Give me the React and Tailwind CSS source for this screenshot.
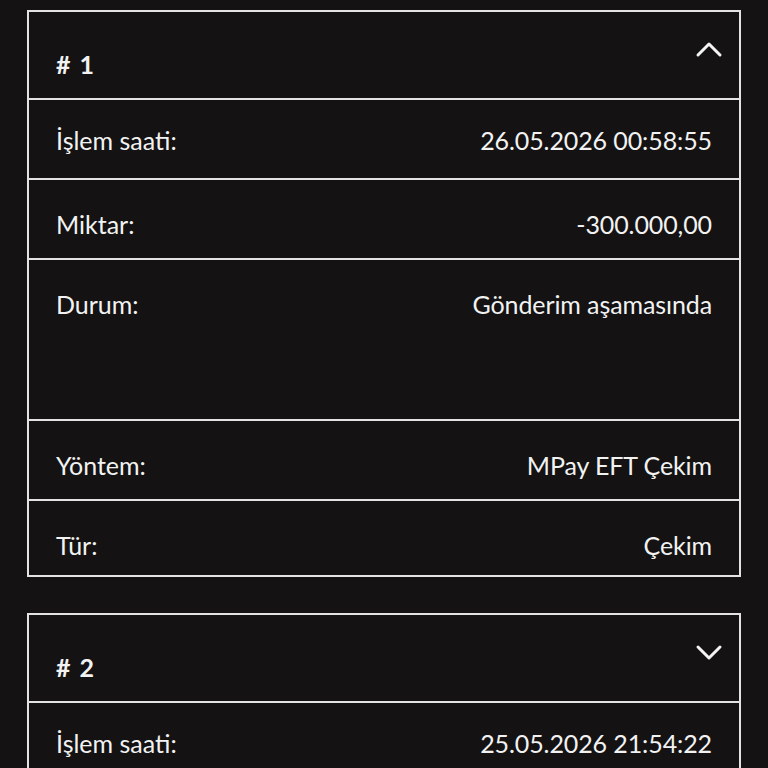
import React, { useState } from 'react'

const transactions = [
  {
    id: 1,
    rows: [
      { label: 'İşlem saati:', value: '26.05.2026 00:58:55', h: 'h-[80px]', pt: 'pt-[25px]' },
      { label: 'Miktar:', value: '-300.000,00', h: 'h-[80px]', pt: 'pt-[29px]' },
      { label: 'Durum:', value: 'Gönderim aşamasında', h: 'h-[161px]', pt: 'pt-[29px]' },
      { label: 'Yöntem:', value: 'MPay EFT Çekim', h: 'h-[80px]', pt: 'pt-[29px]' },
      { label: 'Tür:', value: 'Çekim', h: 'h-[76px]', pt: 'pt-[29px]' },
    ],
  },
  {
    id: 2,
    rows: [
      { label: 'İşlem saati:', value: '25.05.2026 21:54:22', h: 'h-[80px]', pt: 'pt-[25px]' },
    ],
  },
]

const Chevron = ({ up }) => (
  <svg width="28" height="28" viewBox="0 0 28 28" fill="none" stroke="#f4f4f4" strokeWidth="3" strokeLinecap="round" strokeLinejoin="round">
    {up ? <path d="M3 20L14 9l11 11" /> : <path d="M3 9l11 11 11-11" />}
  </svg>
)

const Card = ({ tx, open }) => (
  <div className="border-2 border-[#e3e3e3] bg-[#141212]">
    <div className="h-[86px] flex justify-between pl-[27px] pr-[16px]">
      <span className="pt-[37px] text-[25px] font-bold leading-[30px]">
        #<span className="ml-[9px]">{tx.id}</span>
      </span>
      <span className="pt-[23px]">
        <Chevron up={open} />
      </span>
    </div>
    {tx.rows.map((r) => (
      <div key={r.label} className={`${r.h} border-t-2 border-[#e3e3e3] flex justify-between px-[27px] ${r.pt}`}>
        <span className="text-[25px] leading-[30px]">{r.label}</span>
        <span className="text-[25px] leading-[30px] tracking-[-0.1px]">{r.value}</span>
      </div>
    ))}
  </div>
)

export default function App() {
  const [openId] = useState(1)
  return (
    <div className="min-h-screen bg-[#141212] text-[#f2f2f2] px-[27px] pt-[10px] flex flex-col gap-[36px] font-['Lato','Noto_Sans',sans-serif]">
      {transactions.map((tx) => (
        <Card key={tx.id} tx={tx} open={tx.id === openId} />
      ))}
    </div>
  )
}
